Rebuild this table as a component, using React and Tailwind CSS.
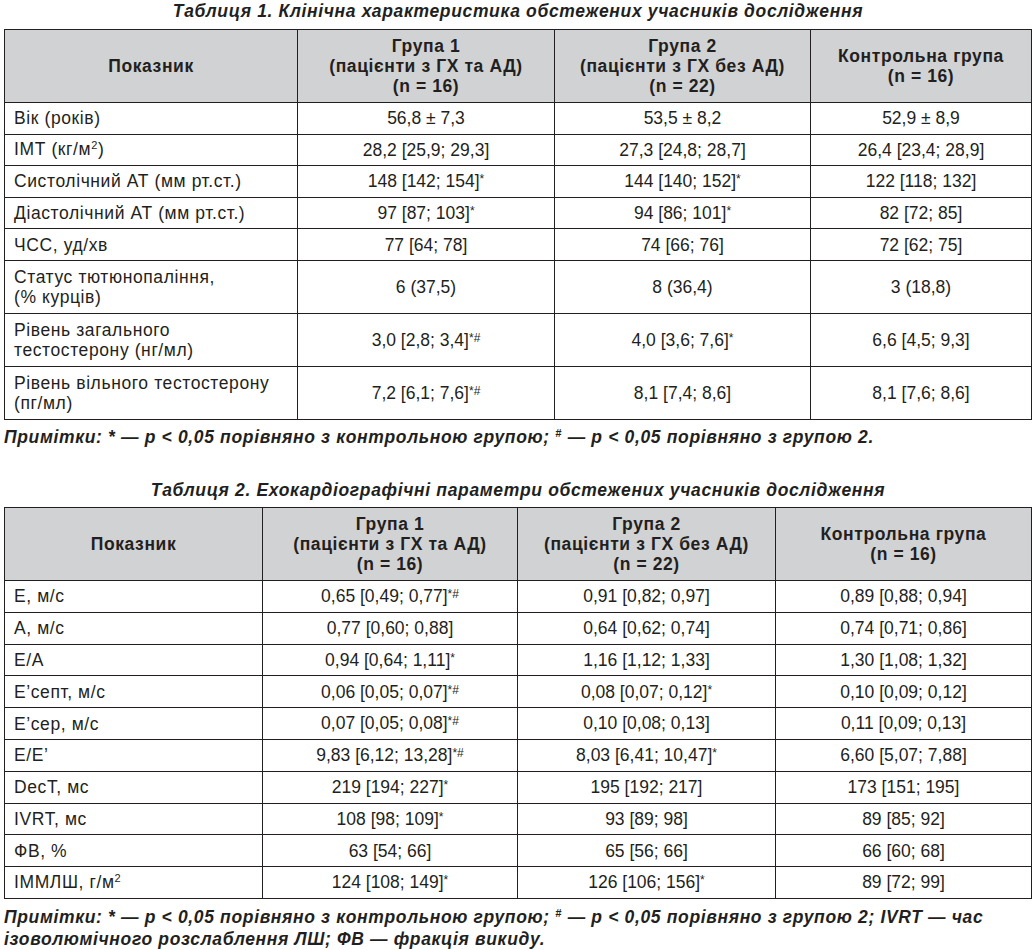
const table1 = {
  cols: ["w-[293px]", "w-[257px]", "w-[256px]", "w-[221px]"],
  headers: [
    "Показник",
    ["Група 1", "(пацієнти з ГХ та АД)", "(n = 16)"],
    ["Група 2", "(пацієнти з ГХ без АД)", "(n = 22)"],
    ["Контрольна група", "(n = 16)"],
  ],
  rows: [
    ["Вік (років)", "56,8 ± 7,3", "53,5 ± 8,2", "52,9 ± 8,9"],
    [
      <>
        ІМТ (кг/м<span className="text-[11px] relative top-[-6px]">2</span>)
      </>,
      "28,2 [25,9; 29,3]",
      "27,3 [24,8; 28,7]",
      "26,4 [23,4; 28,9]",
    ],
    ["Систолічний АТ (мм рт.ст.)", "148 [142; 154]*", "144 [140; 152]*", "122 [118; 132]"],
    ["Діастолічний АТ (мм рт.ст.)", "97 [87; 103]*", "94 [86; 101]*", "82 [72; 85]"],
    ["ЧСС, уд/хв", "77 [64; 78]", "74 [66; 76]", "72 [62; 75]"],
    [["Статус тютюнопаління,", "(% курців)"], "6 (37,5)", "8 (36,4)", "3 (18,8)"],
    [["Рівень загального", "тестостерону (нг/мл)"], "3,0 [2,8; 3,4]*#", "4,0 [3,6; 7,6]*", "6,6 [4,5; 9,3]"],
    [["Рівень вільного тестостерону", "(пг/мл)"], "7,2 [6,1; 7,6]*#", "8,1 [7,4; 8,6]", "8,1 [7,6; 8,6]"],
  ],
};

const table2 = {
  cols: ["w-[258px]", "w-[255px]", "w-[258px]", "w-[256px]"],
  headers: table1.headers,
  rows: [
    ["Е, м/с", "0,65 [0,49; 0,77]*#", "0,91 [0,82; 0,97]", "0,89 [0,88; 0,94]"],
    ["А, м/с", "0,77 [0,60; 0,88]", "0,64 [0,62; 0,74]", "0,74 [0,71; 0,86]"],
    ["Е/А", "0,94 [0,64; 1,11]*", "1,16 [1,12; 1,33]", "1,30 [1,08; 1,32]"],
    ["Е’септ, м/с", "0,06 [0,05; 0,07]*#", "0,08 [0,07; 0,12]*", "0,10 [0,09; 0,12]"],
    ["Е’сер, м/с", "0,07 [0,05; 0,08]*#", "0,10 [0,08; 0,13]", "0,11 [0,09; 0,13]"],
    ["Е/Е’", "9,83 [6,12; 13,28]*#", "8,03 [6,41; 10,47]*", "6,60 [5,07; 7,88]"],
    ["DecT, мс", "219 [194; 227]*", "195 [192; 217]", "173 [151; 195]"],
    ["IVRT, мс", "108 [98; 109]*", "93 [89; 98]", "89 [85; 92]"],
    ["ФВ, %", "63 [54; 66]", "65 [56; 66]", "66 [60; 68]"],
    [
      <>
        ІММЛШ, г/м<span className="text-[11px] relative top-[-6px]">2</span>
      </>,
      "124 [108; 149]*",
      "126 [106; 156]*",
      "89 [72; 99]",
    ],
  ],
};

// "148 [142; 154]*" -> value with small raised marks
const Value = ({ text }) => {
  const m = text.match(/^(.*\])(\*?#?)$/);
  if (!m || !m[2]) return text;
  return (
    <>
      {m[1]}
      <span className="text-[12px] relative top-[-4px]">{m[2]}</span>
    </>
  );
};

const border = "border-[1.5px] border-[#231f20]";

const DataTable = ({ data, rowH }) => (
  <table className={`w-[1027px] table-fixed border-collapse ${border}`}>
    <colgroup>
      {data.cols.map((c, i) => (
        <col key={i} className={c} />
      ))}
    </colgroup>
    <thead>
      <tr className="h-[73px] bg-[#d1d2d4]">
        {data.headers.map((h, i) => (
          <th key={i} className={`${border} text-center font-bold leading-[20px] tracking-[0.6px] align-middle`}>
            {Array.isArray(h) ? h.map((l) => <div key={l}>{l}</div>) : h}
          </th>
        ))}
      </tr>
    </thead>
    <tbody>
      {data.rows.map((r, i) => {
        const double = Array.isArray(r[0]);
        return (
          <tr key={i} className={double ? "h-[53px]" : rowH}>
            <td className={`${border} pl-[9px] leading-[20px] tracking-[0.6px] align-middle`}>
              {double ? r[0].map((l) => <div key={l}>{l}</div>) : r[0]}
            </td>
            {r.slice(1).map((v, j) => (
              <td key={j} className={`${border} text-center align-middle`}>
                <Value text={v} />
              </td>
            ))}
          </tr>
        );
      })}
    </tbody>
  </table>
);

export default function App() {
  return (
    <div className="w-[1036px] h-[950px] bg-white text-[#231f20] font-['Liberation_Sans',Arial,sans-serif] text-[17.5px] px-[4px] overflow-hidden">
      <div className="h-[29px] flex items-center justify-center text-[17.5px] font-bold italic tracking-[0.65px] pb-[6px]">
        Таблиця 1. Клінічна характеристика обстежених учасників дослідження
      </div>
      <DataTable data={table1} rowH="h-[31.6px]" />
      <div className="mt-[7px] text-[17.5px] font-bold italic leading-[20px] tracking-[0.65px]">
        Примітки: * — р &lt; 0,05 порівняно з контрольною групою;{" "}
        <span className="text-[11px] relative top-[-6px]">#</span> — р &lt; 0,05 порівняно з групою 2.
      </div>
      <div className="mt-[28px] h-[30px] flex items-center justify-center text-[17.5px] font-bold italic tracking-[0.65px] pb-[4px]">
        Таблиця 2. Ехокардіографічні параметри обстежених учасників дослідження
      </div>
      <DataTable data={table2} rowH="h-[31.8px]" />
      <div className="mt-[8px] text-[17.5px] font-bold italic leading-[20px] tracking-[0.65px]">
        Примітки: * — р &lt; 0,05 порівняно з контрольною групою;{" "}
        <span className="text-[11px] relative top-[-6px]">#</span> — р &lt; 0,05 порівняно з групою 2; IVRT — час
        <br />
        ізоволюмічного розслаблення ЛШ; ФВ — фракція викиду.
      </div>
    </div>
  );
}
